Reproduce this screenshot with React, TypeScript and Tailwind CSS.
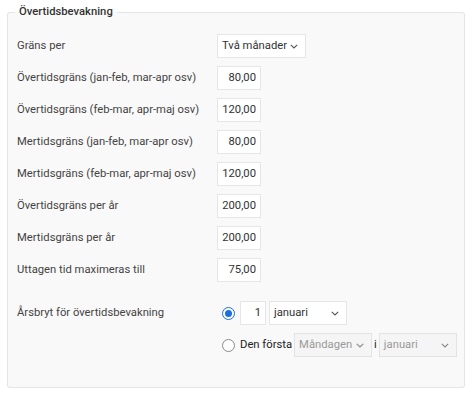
import React from 'react';

const font = { fontFamily: 'Roboto, "Liberation Sans", sans-serif' };

const Chevron = () => (
  <svg width="8" height="5" viewBox="0 0 8 5" className="shrink-0">
    <path d="M0.8 0.8 L4 4 L7.2 0.8" fill="none" stroke="currentColor" strokeWidth="1.1" />
  </svg>
);

type SelectBoxProps = { value: string; width: string; disabled?: boolean };

const SelectBox = ({ value, width, disabled }: SelectBoxProps) => (
  <div
    className={`flex h-6 shrink-0 items-center justify-between whitespace-nowrap border pl-[4px] pr-[7px] ${width} ${
      disabled ? 'border-[#e3e3e3] bg-[#f5f5f5] text-[#9a9a9a]' : 'border-[#e6e6e6] bg-white text-[#333]'
    }`}
  >
    <span>{value}</span>
    <span className={disabled ? 'text-[#888]' : 'text-[#555]'}>
      <Chevron />
    </span>
  </div>
);

const NumberBox = ({ value, width = 'w-[44px]' }: { value: string; width?: string }) => (
  <div className={`flex h-6 shrink-0 items-center justify-end border border-[#e6e6e6] bg-white pr-[4px] text-[#333] ${width}`}>
    {value}
  </div>
);

const Radio = ({ checked }: { checked?: boolean }) =>
  checked ? (
    <span className="flex size-[13px] items-center justify-center rounded-full border-[1.5px] border-[#1a6fe0] bg-white">
      <span className="size-[7px] rounded-full bg-[#1a6fe0]" />
    </span>
  ) : (
    <span className="size-[13px] rounded-full border border-[#8a8a8a] bg-white" />
  );

const rows = [
  { label: 'Övertidsgräns (jan-feb, mar-apr osv)', value: '80,00' },
  { label: 'Övertidsgräns (feb-mar, apr-maj osv)', value: '120,00' },
  { label: 'Mertidsgräns (jan-feb, mar-apr osv)', value: '80,00' },
  { label: 'Mertidsgräns (feb-mar, apr-maj osv)', value: '120,00' },
  { label: 'Övertidsgräns per år', value: '200,00' },
  { label: 'Mertidsgräns per år', value: '200,00' },
  { label: 'Uttagen tid maximeras till', value: '75,00' },
];

export default function App() {
  return (
    <div className="h-[394px] w-[472px] bg-white px-[7px] pt-[4px]" style={font}>
      <fieldset className="h-[384px] rounded-[3px] border border-[#e4e4e4] bg-[#f9f9f9] pl-[9px] pt-[14px]">
        <legend className="ml-[-2px] px-1 text-[11.25px] font-medium leading-4 text-[#333]">Övertidsbevakning</legend>
        <div className="grid grid-cols-[200px_1fr] gap-y-2 whitespace-nowrap text-[11.25px] text-[#444]">
          <div className="flex h-6 items-center">Gräns per</div>
          <SelectBox value="Två månader" width="w-[89px]" />
          {rows.map((r) => (
            <React.Fragment key={r.label}>
              <div className="flex h-6 items-center">{r.label}</div>
              <NumberBox value={r.value} />
            </React.Fragment>
          ))}
          <div className="mt-[11px] flex h-6 items-center">Årsbryt för övertidsbevakning</div>
          <div className="mt-[11px] flex flex-col gap-2">
            <div className="flex h-6 items-center">
              <span className="ml-[5px] mr-[5px] flex">
                <Radio checked />
              </span>
              <NumberBox value="1" width="w-[26px]" />
              <span className="w-[3px]" />
              <SelectBox value="januari" width="w-[78px]" />
            </div>
            <div className="flex h-6 items-center">
              <span className="ml-[5px] mr-[5px] flex">
                <Radio />
              </span>
              <span className="text-[#222]">Den första</span>
              <span className="w-[2px]" />
              <SelectBox value="Måndagen" width="w-[78px]" disabled />
              <span className="mx-[2px] text-[#222]">i</span>
              <SelectBox value="januari" width="w-[78px]" disabled />
            </div>
          </div>
        </div>
      </fieldset>
    </div>
  );
}
